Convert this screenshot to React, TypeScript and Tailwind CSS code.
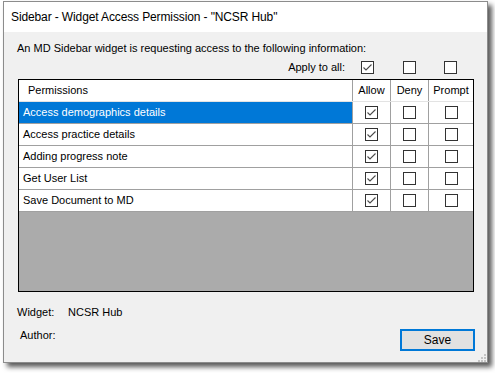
import React from 'react'

const rows = [
  'Access demographics details',
  'Access practice details',
  'Adding progress note',
  'Get User List',
  'Save Document to MD',
]

function CheckBox({ checked = false }: { checked?: boolean }) {
  return (
    <div className="w-[13px] h-[13px] border border-[#333333] bg-white flex items-center justify-center">
      {checked && (
        <svg width="11" height="11" viewBox="0 0 11 11">
          <path d="M1.5 5.5 L4 8 L9.5 2.5" fill="none" stroke="#4a4a4a" strokeWidth="1.1" />
        </svg>
      )}
    </div>
  )
}

function Grip() {
  const dots = [
    [6, 0],
    [3, 3],
    [6, 3],
    [0, 6],
    [3, 6],
    [6, 6],
  ]
  return (
    <svg width="9" height="9" viewBox="0 0 9 9">
      {dots.map(([x, y], i) => (
        <rect key={i} x={x + 1} y={y + 1} width="2" height="2" fill="#c4c4c4" />
      ))}
    </svg>
  )
}

export default function App() {
  return (
    <div
      className="w-[495px] h-[373px] bg-white pl-[3px] pt-[1px] overflow-hidden"
      style={{ fontFamily: '"Liberation Sans", Arial, sans-serif' }}
    >
      <div className="w-[485px] h-[362px] border border-[#8c8c8c] bg-[#f0f0f0] flex flex-col shadow-[4px_4px_5px_rgba(0,0,0,0.65)]">
        {/* title bar */}
        <div className="h-[30px] bg-white flex items-center pl-[7px] text-[12px] tracking-[-0.12px] text-black">
          Sidebar - Widget Access Permission - "NCSR Hub"
        </div>

        <div className="mt-[10px] pl-[13px] text-[11px] leading-[13px] text-black">
          An MD Sidebar widget is requesting access to the following information:
        </div>

        {/* apply to all */}
        <div className="mt-[6px] flex items-center h-[13px] text-[11px] text-black">
          <span className="w-[341px] text-right">Apply to all:</span>
          <div className="ml-[16px]">
            <CheckBox checked />
          </div>
          <div className="ml-[29px]">
            <CheckBox />
          </div>
          <div className="ml-[28px]">
            <CheckBox />
          </div>
        </div>

        {/* grid */}
        <div className="mt-[5px] ml-[14px] w-[456px] h-[214px] border border-black bg-[#ababab] flex flex-col text-[11px] text-black">
          <div className="h-[22px] bg-white flex border-b border-[#e3e3e3]">
            <div className="w-[334px] pl-[9px] flex items-center border-r border-[#a0a0a0]">Permissions</div>
            <div className="w-[38px] flex items-center justify-center border-r border-[#a0a0a0]">Allow</div>
            <div className="w-[38px] flex items-center justify-center border-r border-[#a0a0a0]">Deny</div>
            <div className="w-[44px] flex items-center justify-center">Prompt</div>
          </div>
          {rows.map((r, i) => (
            <div key={r} className="h-[22px] bg-white flex border-b border-[#a0a0a0]">
              <div
                className={
                  i === 0
                    ? 'w-[334px] pl-[4px] flex items-center border-r border-[#a0a0a0] bg-[#0078d7] text-white'
                    : 'w-[334px] pl-[4px] flex items-center border-r border-[#a0a0a0]'
                }
              >
                {r}
              </div>
              <div className="w-[38px] flex items-center justify-center border-r border-[#a0a0a0]">
                <CheckBox checked />
              </div>
              <div className="w-[38px] flex items-center justify-center border-r border-[#a0a0a0]">
                <CheckBox />
              </div>
              <div className="w-[44px] flex items-center justify-center">
                <CheckBox />
              </div>
            </div>
          ))}
        </div>

        {/* widget info */}
        <div className="mt-[14px] pl-[13px] flex text-[11px] leading-[13px] text-black">
          <span className="w-[51px]">Widget:</span>
          <span>NCSR Hub</span>
        </div>
        <div className="mt-[10px] flex items-start justify-between pr-[12px] text-[11px] leading-[13px] text-black">
          <span className="pl-[16px]">Author:</span>
          <button className="w-[75px] h-[22px] border-2 border-[#0078d7] bg-[#e1e1e1] text-[12px] text-black flex items-center justify-center">
            Save
          </button>
        </div>
        <div className="mt-[2px] flex justify-end pr-[1px]">
          <Grip />
        </div>
      </div>
    </div>
  )
}
